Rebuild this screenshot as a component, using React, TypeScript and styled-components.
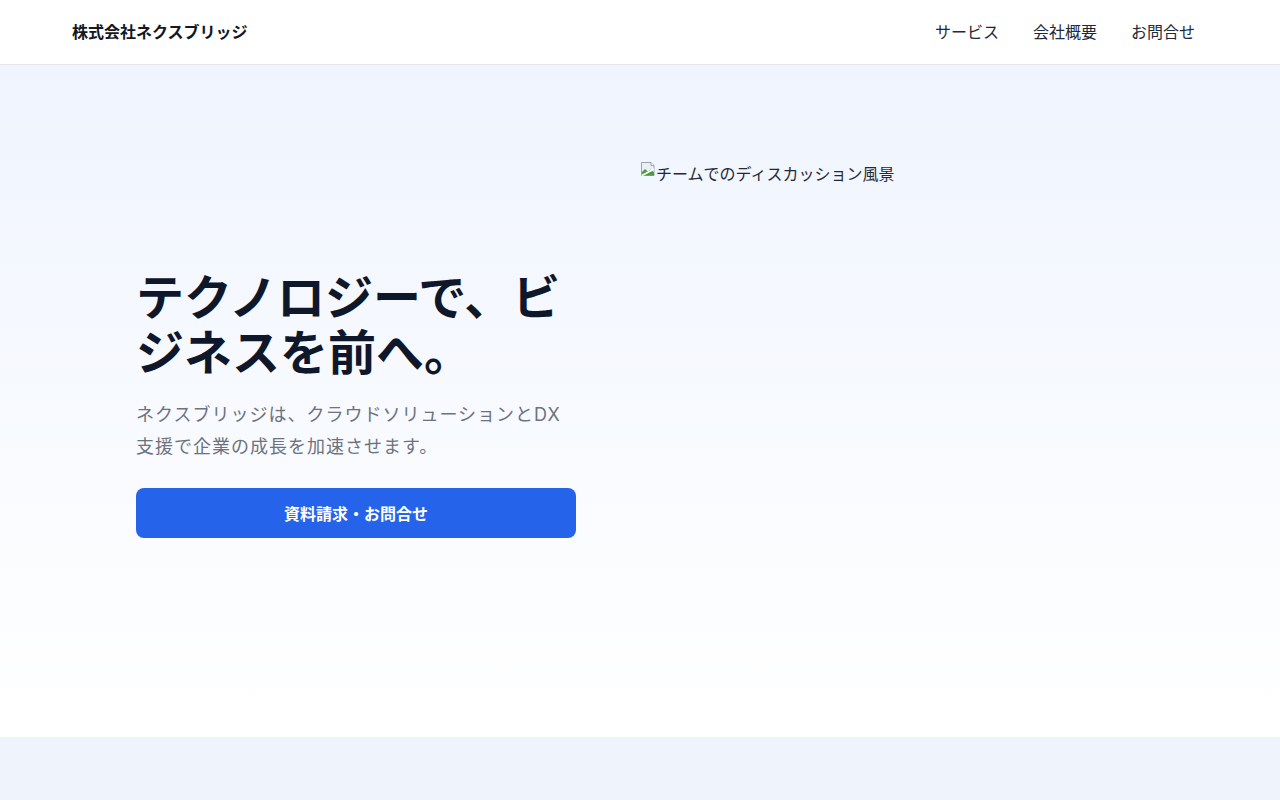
import React from 'react';
import styled, { createGlobalStyle } from 'styled-components';

const GlobalStyle = createGlobalStyle`
  * {
    box-sizing: border-box;
  }
  body {
    margin: 0;
    background: #ffffff;
    color: #111827;
    font-family: Inter, 'Noto Sans CJK JP', 'Noto Sans', sans-serif;
    -webkit-font-smoothing: antialiased;
  }
`;

const navItems = ['サービス', '会社概要', 'お問合せ'];

// stand-in for the browser's broken image glyph
const BrokenImageIcon: React.FC = () => (
  <IconSvg width="16" height="16" viewBox="0 0 16 16" aria-hidden="true">
    <path d="M1.5 1.5h9.5l3 3v10h-12.5z" fill="#e8f1f8" stroke="#9aa3ad" strokeWidth="1" />
    <path d="M11 1.5v3h3" fill="#ffffff" stroke="#9aa3ad" strokeWidth="1" />
    <path d="M2 14.5v-3.5l3-3 3 2.5 2.5-2 3.5 3v3z" fill="#4e9a3a" />
    <path d="M2 14.5l12-6.5" stroke="#ffffff" strokeWidth="1.6" />
  </IconSvg>
);

const App: React.FC = () => {
  return (
    <>
      <GlobalStyle />
      <Header>
        <Logo>株式会社ネクスブリッジ</Logo>
        <Nav>
          {navItems.map((item) => (
            <NavLink key={item} href="#">
              {item}
            </NavLink>
          ))}
        </Nav>
      </Header>
      <Hero>
        <HeroGrid>
          <HeroText>
            <Title>テクノロジーで、ビジネスを前へ。</Title>
            <Lead>
              ネクスブリッジは、クラウドソリューションとDX支援で企業の成長を加速させます。
            </Lead>
            <CtaButton type="button">資料請求・お問合せ</CtaButton>
          </HeroText>
          <ImageFrame role="img" aria-label="チームでのディスカッション風景">
            <BrokenImageIcon />
            <AltText>チームでのディスカッション風景</AltText>
          </ImageFrame>
        </HeroGrid>
      </Hero>
      <NextSection />
    </>
  );
};

const Header = styled.header`
  height: 65px;
  display: flex;
  align-items: center;
  justify-content: space-between;
  padding: 0 85px 0 72px;
  background: #ffffff;
  border-bottom: 1px solid #e5e7eb;
`;

const Logo = styled.div`
  font-size: 16px;
  font-weight: 700;
  color: #111827;
  margin-top: -3px;
`;

const Nav = styled.nav`
  display: flex;
  gap: 34px;
  margin-top: -3px;
`;

const NavLink = styled.a`
  font-size: 16px;
  color: #1f2937;
  text-decoration: none;
`;

const Hero = styled.section`
  height: 672px;
  display: flex;
  align-items: center;
  background: linear-gradient(180deg, #eff4fe 0%, #ffffff 100%);
`;

const HeroGrid = styled.div`
  width: 100%;
  display: grid;
  grid-template-columns: 440px 1fr;
  gap: 64px;
  align-items: center;
  padding: 0 136px;
`;

const HeroText = styled.div`
  display: flex;
  flex-direction: column;
  padding-top: 6px;
`;

const Title = styled.h1`
  margin: 0 0 19px;
  font-size: 48px;
  line-height: 1.15;
  font-weight: 700;
  color: #0f172a;
`;

const Lead = styled.p`
  margin: 0 0 25px;
  font-size: 18px;
  line-height: 32px;
  letter-spacing: 1px;
  color: #6b7280;
`;

const CtaButton = styled.button`
  height: 50px;
  width: 100%;
  border: none;
  border-radius: 8px;
  background: #2563eb;
  color: #ffffff;
  font-family: inherit;
  font-size: 16px;
  font-weight: 700;
  cursor: pointer;
`;

const ImageFrame = styled.div`
  height: 480px;
  display: flex;
  align-items: flex-start;
`;

const IconSvg = styled.svg`
  flex-shrink: 0;
  display: block;
`;

const AltText = styled.span`
  font-size: 16px;
  line-height: 24px;
  color: #1f2937;
  margin-top: 1px;
`;

const NextSection = styled.section`
  height: 200px;
  background: #eef3fc;
`;

export default App;
